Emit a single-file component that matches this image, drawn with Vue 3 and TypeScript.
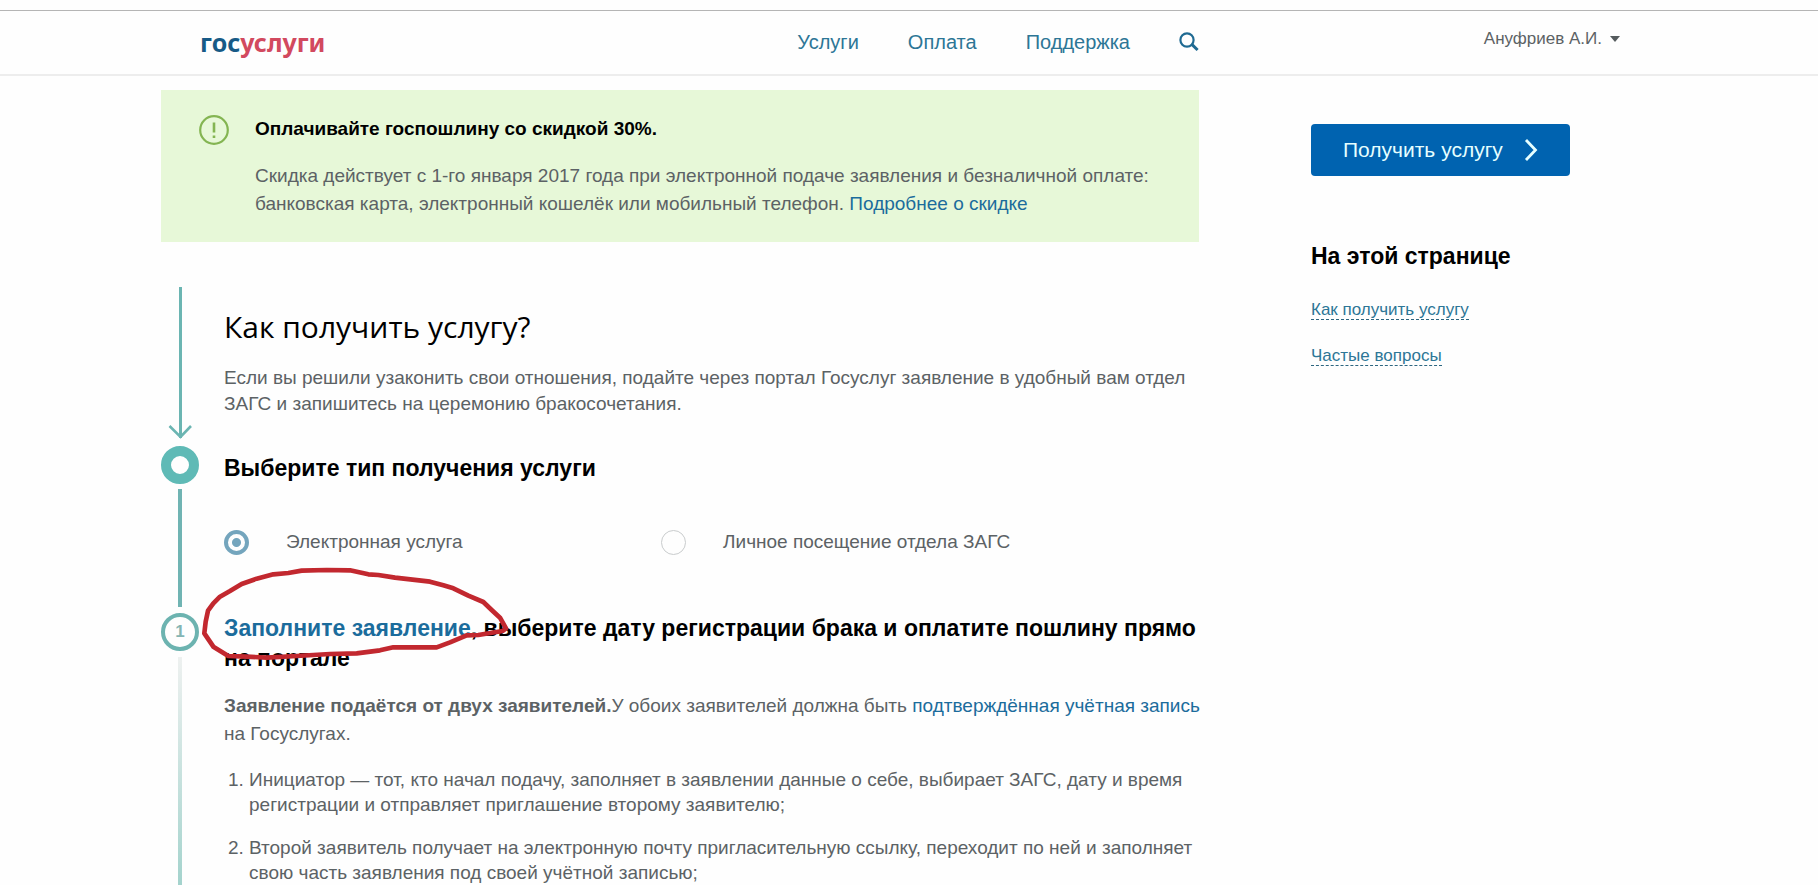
<script setup lang="ts">
import { ref } from 'vue'

interface NavItem {
  label: string
  href: string
}

const nav: NavItem[] = [
  { label: 'Услуги', href: '#services' },
  { label: 'Оплата', href: '#payment' },
  { label: 'Поддержка', href: '#support' },
]

const anchors: NavItem[] = [
  { label: 'Как получить услугу', href: '#how' },
  { label: 'Частые вопросы', href: '#faq' },
]

const options = [
  { value: 'online', label: 'Электронная услуга' },
  { value: 'visit', label: 'Личное посещение отдела ЗАГС' },
]

const steps: string[] = [
  'Инициатор — тот, кто начал подачу, заполняет в заявлении данные о себе, выбирает ЗАГС, дату и время регистрации и отправляет приглашение второму заявителю;',
  'Второй заявитель получает на электронную почту пригласительную ссылку, переходит по ней и заполняет свою часть заявления под своей учётной записью;',
]

const method = ref('online')
</script>

<template>
  <div class="page">
    <header class="header">
      <div class="columns header-inner">
        <div class="header-main">
          <a class="logo" href="#home"><span class="logo-blue">гос</span><span class="logo-red">услуги</span></a>
          <nav class="nav">
            <a v-for="item in nav" :key="item.href" :href="item.href">{{ item.label }}</a>
            <button class="search" type="button" aria-label="Поиск">
              <svg width="20" height="20" viewBox="0 0 20 20" fill="none" stroke="#1f6a92">
                <circle cx="8" cy="8" r="6.6" stroke-width="2.2" />
                <path d="M12.6 12.2 L18.6 18" stroke-width="3" />
              </svg>
            </button>
          </nav>
        </div>
        <button class="user" type="button">
          Ануфриев А.И.
          <svg width="10" height="6" viewBox="0 0 10 6"><path d="M0 0H10L5 6Z" fill="#555b5e" /></svg>
        </button>
      </div>
    </header>

    <div class="columns body">
      <main>
        <section class="notice">
          <svg class="notice-icon" width="30" height="30" viewBox="0 0 30 30" fill="none" stroke="#84b552">
            <circle cx="15" cy="15" r="13.8" stroke-width="2.2" />
            <path d="M15 7.5V17.5M15 20.5V23" stroke-width="2.6" />
          </svg>
          <div>
            <h3 class="notice-title">Оплачивайте госпошлину со скидкой 30%.</h3>
            <p class="notice-text">
              Скидка действует с 1-го января 2017 года при электронной подаче заявления и безналичной оплате:
              банковская карта, электронный кошелёк или мобильный телефон. <a href="#discount">Подробнее о скидке</a>
            </p>
          </div>
        </section>

        <section id="how" class="row row-intro">
          <div class="rail">
            <div class="line line-thin"></div>
            <svg class="arrow" width="24" height="14" viewBox="0 0 24 14" fill="none" stroke="#6bb5b2" stroke-width="2.6">
              <path d="M1.5 1L12.5 12L23 1" />
            </svg>
          </div>
          <div class="content">
            <h2>Как получить услугу?</h2>
            <p>
              Если вы решили узаконить свои отношения, подайте через портал Госуслуг заявление в удобный вам отдел
              ЗАГС и запишитесь на церемонию бракосочетания.
            </p>
          </div>
        </section>

        <section class="row row-type">
          <div class="rail">
            <div class="dot"></div>
            <div class="line line-wide"></div>
          </div>
          <div class="content">
            <h3>Выберите тип получения услуги</h3>
            <div class="options">
              <label v-for="o in options" :key="o.value">
                <input v-model="method" type="radio" name="method" :value="o.value" />
                <span>{{ o.label }}</span>
              </label>
            </div>
          </div>
        </section>

        <section class="row row-step">
          <div class="rail">
            <div class="number">1</div>
            <div class="line line-fade"></div>
          </div>
          <div class="content">
            <h3>
              <a href="#apply">Заполните заявление</a>, выберите дату регистрации брака и оплатите пошлину прямо
              <br />на портале
            </h3>
            <p class="step-text">
              <b>Заявление подаётся от двух заявителей.</b>У обоих заявителей должна быть
              <a href="#account">подтверждённая учётная запись</a><br />на Госуслугах.
            </p>
            <ol>
              <li v-for="s in steps" :key="s">{{ s }}</li>
            </ol>
            <svg class="mark" width="310" height="93" viewBox="150 201 930 279" fill="none" aria-hidden="true">
              <path
                d="M455 212L530 210L600 211L655 223L685 225L735 233L840 245L880 256L910 265L955 287L1000 306L1025 330L1050 353L1068 385L1058 393L985 405L950 406L900 427L860 442L730 442L690 451L620 460L540 462L440 468L350 473L290 470L235 468L190 440L163 400L167 365L174 332L190 310L210 290L240 273L275 252L320 236L370 223L415 219Z"
                stroke="#c2282f" stroke-width="14" stroke-linejoin="round"
              />
            </svg>
          </div>
        </section>
      </main>

      <aside>
        <button class="cta" type="button">
          Получить услугу
          <svg width="14" height="24" viewBox="0 0 14 24" fill="none" stroke="#e6ffff" stroke-width="2.8"><path d="M2 2L11.5 12L2 22" /></svg>
        </button>
        <h3>На этой странице</h3>
        <ul>
          <li v-for="a in anchors" :key="a.href"><a :href="a.href">{{ a.label }}</a></li>
        </ul>
      </aside>
    </div>
  </div>
</template>

<style>
body {
  margin: 0;
  background: #fefefe;
}
</style>

<style scoped>
.page {
  min-height: 100vh;
  box-sizing: border-box;
  padding-top: 10px;
  display: flex;
  flex-direction: column;
  font-family: "Liberation Sans", Arial, sans-serif;
  font-size: 19px;
  line-height: 26px;
  color: #5c6265;
}
a {
  color: #1b6c9c;
  text-decoration: none;
}
h2, h3, p, ul, ol {
  margin: 0;
  padding: 0;
}
h3 {
  font-size: 23px;
  line-height: 30px;
  color: #000;
}
button {
  font-family: inherit;
  border: 0;
  padding: 0;
  background: none;
  cursor: pointer;
}
.columns {
  width: 100%;
  max-width: 1496px;
  margin: 0 auto;
  display: grid;
  grid-template-columns: minmax(0, 3fr) minmax(0, 1fr);
  column-gap: 112px;
}
.header {
  border-top: 1px solid #b5b5b5;
  border-bottom: 2px solid #ededed;
}
.header-inner {
  height: 63px;
}
.header-main {
  display: flex;
  align-items: center;
  justify-content: space-between;
  padding: 0 0 2px 39px;
}
.logo {
  font-family: "Noto Sans", "Open Sans", sans-serif;
  font-weight: 700;
  font-size: 25px;
  line-height: 30px;
}
.logo-blue { color: #175a86; }
.logo-red { color: #d2495f; }
.nav {
  display: flex;
  align-items: center;
  gap: 49px;
  font-size: 20px;
}
.nav a { color: #2d7696; }
.search {
  display: flex;
}
.user {
  justify-self: end;
  align-self: center;
  display: flex;
  align-items: center;
  gap: 8px;
  padding: 0 37px 8px 0;
  font-size: 17px;
  line-height: 26px;
  color: #5c6265;
}
.body {
  flex: 1;
  padding-top: 14px;
}
main {
  display: flex;
  flex-direction: column;
}
.notice {
  display: flex;
  gap: 26px;
  padding: 25px 38px 24px;
  margin-bottom: 45px;
  background: #e7f8d8;
}
.notice-icon { flex: none; }
.notice-title {
  font-size: 19px;
  line-height: 28px;
  margin-bottom: 19px;
}
.notice-text, .step-text { line-height: 28px; }
.row {
  display: grid;
  grid-template-columns: 38px minmax(0, 1fr);
  column-gap: 25px;
}
.rail {
  display: flex;
  flex-direction: column;
  align-items: center;
}
.line { flex: 1; }
.line-thin {
  width: 3px;
  background: #6bb5b2;
}
.arrow {
  margin: -13px 0 7px;
}
.line-wide {
  width: 4px;
  margin: 5px 0 6px;
  background: #70b4b3;
}
.line-fade {
  width: 4px;
  margin-top: 6px;
  background: linear-gradient(#eef1f0, #a4d3cd);
}
.dot, .number {
  box-sizing: border-box;
  width: 38px;
  height: 38px;
  border-radius: 50%;
}
.dot { border: 10px solid #5fbab6; }
.number {
  border: 4px solid #6cb3b0;
  font-size: 17px;
  line-height: 30px;
  text-align: center;
  color: #84b5b3;
  font-weight: 700;
}
.row-intro .content { padding: 20px 0 29px; }
h2 {
  font-family: "Open Sans", "Noto Sans", sans-serif;
  font-weight: 400;
  font-size: 30px;
  line-height: 40px;
  color: #000;
  margin-bottom: 18px;
}
.row-type .content { padding: 7px 0 58px; }
.options {
  display: grid;
  grid-template-columns: 13fr 16fr;
  margin-top: 46px;
}
.options label {
  display: flex;
  align-items: center;
  gap: 37px;
}
.options input {
  appearance: none;
  box-sizing: border-box;
  flex: none;
  width: 25px;
  height: 25px;
  margin: 0;
  border: 1px solid #c9cccd;
  border-radius: 50%;
}
.options input:checked {
  border: 4px solid #74a5bd;
  background: radial-gradient(circle, #74a5bd 4px, #fefefe 5px);
}
.row-step { flex: 1; }
.row-step .content { position: relative; }
.row-step h3, .step-text {
  margin-bottom: 19px;
  white-space: nowrap;
}
.mark {
  position: absolute;
  left: -24px;
  top: -46px;
  pointer-events: none;
}
ol {
  padding-left: 25px;
  line-height: 25px;
}
ol li + li { margin-top: 18px; }
aside { padding-top: 34px; }
.cta {
  display: flex;
  align-items: center;
  gap: 21px;
  height: 52px;
  padding: 0 32px;
  border-radius: 4px;
  background: #0063b0;
  color: #e6ffff;
  font-size: 21px;
  white-space: nowrap;
}
aside h3 { margin: 65px 0 26px; }
aside ul {
  list-style: none;
  display: grid;
  gap: 20px;
  font-size: 17px;
}
aside ul a {
  color: #2d7696;
  border-bottom: 1px dashed #2d6680;
}
</style>
